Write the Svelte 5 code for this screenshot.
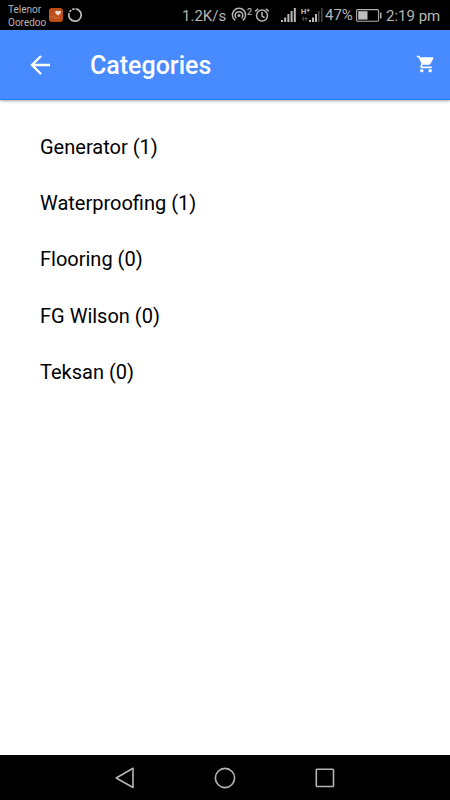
<script lang="ts">
  type Category = {
    name: string;
    count: number;
  };

  let categories: Category[] = [
    { name: "Generator", count: 1 },
    { name: "Waterproofing", count: 1 },
    { name: "Flooring", count: 0 },
    { name: "FG Wilson", count: 0 },
    { name: "Teksan", count: 0 }
  ];
</script>

<div class="screen">
  <div class="status-bar">
    <div class="carriers">
      <span>Telenor</span>
      <span>Ooredoo</span>
    </div>

    <svg class="health" width="14" height="14" viewBox="0 0 14 14">
      <rect width="14" height="14" rx="3" fill="#bd4e18" />
      <path d="M9.1 7.8 6.5 5.2C5.2 3.4 7.7 1.8 9.1 3.5c1.4-1.7 3.9-.1 2.6 1.7z" fill="#eadbd2" />
      <path d="M1.5 9h2l1.2-1.5L6.3 11l1.3-2 1 1h2.5" fill="none" stroke="#d9804f" stroke-width=".6" />
    </svg>

    <svg class="ring" width="16" height="16" viewBox="0 0 16 16" fill="none" stroke="#bdbdbd" stroke-width="1.7">
      <circle cx="8" cy="8" r="6.2" pathLength="100" stroke-dasharray="79 3 6 3 6 3" transform="rotate(-84 8 8)" />
    </svg>

    <span class="speed">1.2K/s</span>

    <svg class="hotspot" width="22" height="16" viewBox="0 0 22 16" fill="none" stroke="#b5b5b5" stroke-width="1.5">
      <path d="M4.3 13.4a6.6 6.6 0 1 1 7.4 0" />
      <path d="M5.4 11.2a3.8 3.8 0 1 1 5.2 0" />
      <circle cx="8" cy="8.5" r="1.5" fill="#b5b5b5" stroke="none" />
      <text x="16" y="7.8" class="badge">2</text>
    </svg>

    <svg class="alarm" width="16" height="16" viewBox="0 0 16 16" fill="none" stroke="#b5b5b5" stroke-width="1.5">
      <circle cx="8" cy="8.6" r="5.5" />
      <path d="M8 5v4l2.5 1.7M1.2 4.4l3-2.6M14.8 4.4l-3-2.6" />
    </svg>

    <svg class="signal" width="16" height="15" viewBox="0 0 16 15" fill="#b8b8b8">
      <rect x="0" y="12" width="2" height="2" />
      <rect x="3.2" y="9.5" width="2" height="4.5" />
      <rect x="6.4" y="6" width="2" height="8" />
      <rect x="9.6" y="3" width="2" height="11" />
      <rect x="12.8" y="0" width="2" height="14" />
    </svg>

    <svg class="signal-data" width="22" height="15" viewBox="0 0 22 15" fill="#b8b8b8">
      <text x="-.3" y="6" class="net">H</text>
      <path d="M5.7 1.8h1v-1h1v1h1v1h-1v1h-1v-1h-1z" />
      <path d="M2.2 8.5v4.2M.8 11h2.8M5 13V9M3.7 10.5h2.8" stroke="#555" fill="none" />
      <rect x="8" y="12" width="2" height="2" />
      <rect x="11" y="9.5" width="2" height="4.5" />
      <rect x="14" y="6" width="2" height="8" />
      <rect x="17" y="3" width="1.6" height="11" fill="#464646" />
      <rect x="20" y="0" width="1.6" height="14" fill="#464646" />
    </svg>

    <span class="percent">47%</span>

    <svg class="battery" width="26" height="13" viewBox="0 0 26 13">
      <rect x=".6" y=".6" width="22" height="11.6" rx="1.2" fill="none" stroke="#b0b0b0" stroke-width="1.1" />
      <rect x="2.2" y="2.2" width="9.3" height="8.4" fill="#bdbdbd" />
      <rect x="24" y="3.5" width="1.5" height="6" fill="#b0b0b0" />
    </svg>

    <span class="clock">2:19 pm</span>
  </div>

  <header class="toolbar">
    <button class="back" type="button" aria-label="Back">
      <svg width="20" height="20" viewBox="0 0 20 20" fill="none" stroke="#fff" stroke-width="2.4">
        <path d="M20 10H2M11 1l-9 9 9 9" />
      </svg>
    </button>
    <h1>Categories</h1>
    <button class="cart" type="button" aria-label="Cart">
      <svg width="20" height="20" viewBox="0 0 24 24" fill="#fff">
        <path d="M7 18c-1.1 0-1.99.9-1.99 2S5.9 22 7 22s2-.9 2-2-.9-2-2-2zM1 2v2h2l3.6 7.59-1.35 2.45c-.16.28-.25.61-.25.96 0 1.1.9 2 2 2h12v-2H7.42c-.14 0-.25-.11-.25-.25l.03-.12.9-1.63h7.45c.75 0 1.41-.41 1.75-1.03l3.58-6.49A1 1 0 0 0 20 4H5.21l-.94-2H1zm16 16c-1.1 0-1.99.9-1.99 2s.89 2 1.99 2 2-.9 2-2-.9-2-2-2z" />
      </svg>
    </button>
  </header>

  <main>
    <ul>
      {#each categories as category}
        <li>{category.name} ({category.count})</li>
      {/each}
    </ul>
  </main>

  <nav>
    <svg width="22" height="22" viewBox="0 0 22 22" fill="none" stroke="#b5b5b5" stroke-width="1.6" stroke-linejoin="round">
      <path d="M19 1.3v19.2L2.2 11z" />
    </svg>
    <svg width="22" height="22" viewBox="0 0 22 22" fill="none" stroke="#b5b5b5" stroke-width="1.6">
      <circle cx="11" cy="11" r="9.6" />
    </svg>
    <svg width="22" height="22" viewBox="0 0 22 22" fill="none" stroke="#b5b5b5" stroke-width="1.6">
      <rect x="2.3" y="2.3" width="17.2" height="17.2" rx=".8" />
    </svg>
  </nav>
</div>

<style>
  :global(body) {
    background: #fff;
  }

  .screen {
    display: flex;
    flex-direction: column;
    height: 100vh;
    overflow: hidden;
    font-family: Roboto, sans-serif;
    background: #fff;
  }

  svg {
    display: block;
    flex: none;
  }

  .status-bar {
    display: flex;
    align-items: center;
    flex: none;
    height: 30px;
    box-sizing: border-box;
    padding-left: 8px;
    background: #000;
    color: #b5b5b5;
    font-size: 15px;
    line-height: 30px;
    white-space: nowrap;
  }

  .carriers {
    display: flex;
    flex-direction: column;
    flex: none;
    width: 41px;
    padding-top: 1px;
    font-size: 10px;
    line-height: 13px;
  }

  .ring {
    margin-left: 4px;
  }

  .speed {
    flex: none;
    width: 49px;
    margin-left: 99px;
    padding-top: 2px;
  }

  .alarm {
    margin-left: 1px;
  }

  .badge {
    fill: #b5b5b5;
    stroke: none;
    font-size: 9px;
    font-weight: 500;
  }

  .signal {
    margin-left: 11px;
  }

  .signal-data {
    margin-left: 4px;
  }

  .net {
    font-size: 8px;
    font-weight: 700;
  }

  .percent {
    flex: none;
    width: 31px;
    margin-left: 2px;
  }

  .clock {
    flex: none;
    margin-left: 4px;
    padding-top: 2px;
  }

  .toolbar {
    display: flex;
    align-items: center;
    flex: none;
    height: 70px;
    box-sizing: border-box;
    padding: 0 14px 0 30px;
    border-bottom: 1px solid #1f7cf0;
    background: #488aff;
    box-shadow: 0 1px 3px rgba(0, 0, 0, 0.35);
    color: #fff;
  }

  button {
    padding: 0;
    border: none;
    background: transparent;
    cursor: pointer;
  }

  h1 {
    flex: 1;
    margin: 0 0 0 40px;
    padding-top: 3px;
    font-size: 25px;
    font-weight: 500;
    line-height: 30px;
  }

  .cart {
    margin-top: -2px;
  }

  main {
    flex: 1;
  }

  ul {
    margin: 0;
    padding: 19px 0 0 40px;
    list-style: none;
  }

  li {
    height: 56.2px;
    color: #000;
    font-size: 20px;
    line-height: 56px;
  }

  nav {
    display: flex;
    align-items: center;
    justify-content: center;
    gap: 78px;
    flex: none;
    height: 45px;
    background: #000;
  }
</style>
